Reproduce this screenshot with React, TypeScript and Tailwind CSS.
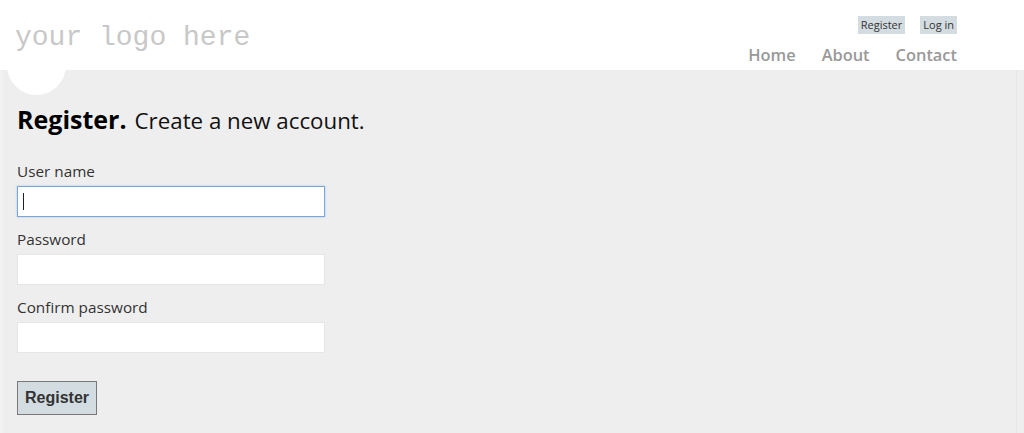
import { useState } from 'react';

const sans = "font-['Open_Sans','Noto_Sans',sans-serif]";

function Field({ label, type, focused }: { label: string; type: string; focused?: boolean }) {
  const [value, setValue] = useState('');
  return (
    <div className="flex flex-col">
      <label className={`${sans} text-[15.3px] leading-[20px] text-[#333]`}>{label}</label>
      <div className="relative mt-[5px] w-[308px]">
        <input
          type={type}
          value={value}
          onChange={(e) => setValue(e.target.value)}
          className={
            focused
              ? 'block h-[31px] w-full border border-[#7aa7db] bg-white px-[5px] outline-none shadow-[0_0_2px_#a9c7ec]'
              : 'block h-[31px] w-full border border-[#e6e6e6] bg-white px-[5px] outline-none'
          }
        />
        {focused && value === '' && (
          <span className="absolute left-[6px] top-[7px] h-[17px] w-px bg-[#222]" />
        )}
      </div>
    </div>
  );
}

export default function App() {
  return (
    <div className="relative flex h-[433px] w-[1024px] flex-col overflow-hidden bg-[#eeeeee]">
      <div className="absolute left-[7px] top-[36px] h-[59px] w-[59px] rounded-full bg-white" />
      <div className="absolute left-0 top-[70px] h-[363px] w-[3px] bg-[#f2f2f2]" />
      <div className="absolute left-[1016px] top-[70px] h-[363px] w-px bg-[#e6e6e6]" />

      <header className="relative flex h-[70px] justify-between bg-white pr-[67px]">
        <a className="pl-[15px] pt-[20px] font-['Liberation_Mono',monospace] text-[28px] leading-[36px] text-[#c8c8c8]">
          your logo here
        </a>
        <div className="flex flex-col items-end">
          <div className={`${sans} mt-[16px] flex gap-[15px] text-[11px] leading-[18px] text-[#333]`}>
            <a className="bg-[#d3dce0] px-[3px]">Register</a>
            <a className="bg-[#d3dce0] px-[3px]">Log in</a>
          </div>
          <nav className={`${sans} mt-[9px] flex gap-[26px] text-[16.4px] font-semibold leading-[24px] text-[#999]`}>
            <a>Home</a>
            <a>About</a>
            <a>Contact</a>
          </nav>
        </div>
      </header>

      <main className="relative flex flex-col pl-[17px] pt-[33px]">
        <div className={`${sans} flex items-baseline gap-[8px] text-black`}>
          <h1 className="text-[25px] font-bold leading-[32px]">Register.</h1>
          <h2 className="text-[22.3px] leading-[32px] text-[#111]">Create a new account.</h2>
        </div>
        <div className="mt-[24px] flex flex-col gap-[12px]">
          <Field label="User name" type="text" focused />
          <Field label="Password" type="password" />
          <Field label="Confirm password" type="password" />
        </div>
        <div className="mt-[28px]">
          <button className="h-[34px] border border-[#787878] bg-[#d3dce0] px-[7px] font-['Liberation_Sans',Arial,sans-serif] text-[16px] font-bold text-[#333]">
            Register
          </button>
        </div>
      </main>
    </div>
  );
}
